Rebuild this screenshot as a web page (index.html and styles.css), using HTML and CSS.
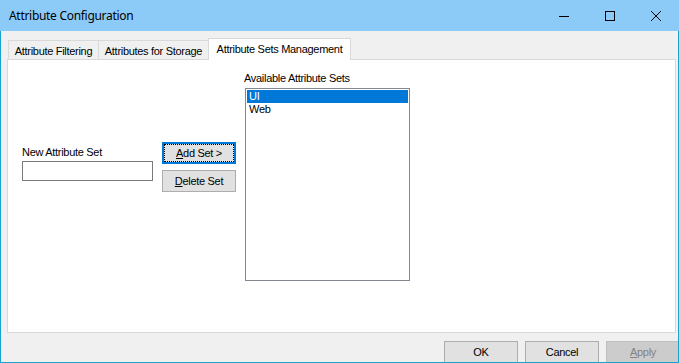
FILE: index.html
```html
<!DOCTYPE html>
<html>
<head>
<meta charset="utf-8">
<link rel="stylesheet" href="styles.css">
</head>
<body>
<div class="window">
  <div class="titlebar">
    <span class="title">Attribute Configuration</span>
    <div class="controls">
      <div class="ctl"><svg width="10" height="10" viewBox="0 0 10 10"><path d="M0 5.5H10" stroke="#000" stroke-width="1"/></svg></div>
      <div class="ctl"><svg width="10" height="10" viewBox="0 0 10 10"><rect x="0.5" y="0.5" width="9" height="9" fill="none" stroke="#000" stroke-width="1"/></svg></div>
      <div class="ctl"><svg width="10" height="10" viewBox="0 0 10 10"><path d="M0 0L10 10M10 0L0 10" stroke="#000" stroke-width="1"/></svg></div>
    </div>
  </div>
  <div class="client">
    <div class="tabs">
      <div class="tab t1">Attribute Filtering</div>
      <div class="tab t2">Attributes for Storage</div>
      <div class="tab t3 active">Attribute Sets Management</div>
    </div>
    <div class="page">
      <div class="col-new">
        <div class="label">New Attribute Set</div>
        <div class="textbox"></div>
      </div>
      <div class="col-btns">
        <div class="btn focused"><span class="focusrect"><u>A</u>dd Set &gt;</span></div>
        <div class="btn"><u>D</u>elete Set</div>
      </div>
      <div class="col-list">
        <div class="label">Available Attribute Sets</div>
        <div class="listbox">
          <div class="item selected">UI</div>
          <div class="item">Web</div>
        </div>
      </div>
    </div>
    <div class="footer">
      <div class="btn fbtn">OK</div>
      <div class="btn fbtn">Cancel</div>
      <div class="btn fbtn disabled"><u>A</u>pply</div>
    </div>
  </div>
</div>
</body>
</html>
```
FILE: styles.css
```css
html, body {
  margin: 0;
  padding: 0;
  background: #f0f0f0;
}
.window {
  width: 679px;
  height: 363px;
  overflow: hidden;
  font-family: "Liberation Sans", Arial, sans-serif;
  font-size: 11px;
  letter-spacing: -0.3px;
  color: #000;
}
.titlebar {
  height: 31px;
  background: #8ccaf8;
  display: flex;
  align-items: center;
}
.title {
  font-family: "Noto Sans", sans-serif;
  font-size: 12px;
  letter-spacing: -0.3px;
  padding-left: 9px;
  flex: 1;
  padding-bottom: 1px;
}
.controls {
  display: flex;
  height: 31px;
}
.ctl {
  width: 46px;
  height: 31px;
  display: flex;
  align-items: center;
  justify-content: center;
}
.ctl svg {
  display: block;
  shape-rendering: crispEdges;
}
.client {
  height: 332px;
  box-sizing: border-box;
  border-left: 1px solid #17a3cc;
  border-right: 1px solid #17a3cc;
  border-bottom: 1px solid #17a3cc;
  background: #f0f0f0;
  overflow: hidden;
}
.tabs {
  display: flex;
  align-items: flex-end;
  padding-top: 7px;
  padding-left: 7px;
  height: 21px;
}
.tab {
  box-sizing: border-box;
  height: 19px;
  border: 1px solid #d9d9d9;
  border-bottom: none;
  background: #f0f0f0;
  display: flex;
  align-items: center;
  justify-content: center;
  white-space: nowrap;
  padding-top: 1px;
}
.t1 { width: 91px; }
.t2 { width: 110px; border-left: none; }
.t3 { width: 143px; }
.tab.active {
  height: 22px;
  background: #fff;
  position: relative;
  z-index: 1;
  margin-bottom: -1px;
  padding-bottom: 3px;
  margin-left: -1px;
}
.page {
  margin-left: 6px;
  width: 669px;
  height: 274px;
  box-sizing: border-box;
  border: 1px solid #d9d9d9;
  background: #fff;
  display: flex;
  align-items: flex-start;
}
.label {
  line-height: 13px;
  white-space: nowrap;
}
.col-new {
  margin-left: 14px;
  margin-top: 86px;
}
.textbox {
  margin-top: 2px;
  width: 131px;
  height: 20px;
  box-sizing: border-box;
  border: 1px solid #7a7a7a;
  background: #fff;
}
.col-btns {
  margin-left: 9px;
  margin-top: 82px;
  display: flex;
  flex-direction: column;
  gap: 6px;
}
.btn {
  box-sizing: border-box;
  width: 74px;
  height: 22px;
  background: #e1e1e1;
  border: 1px solid #adadad;
  display: flex;
  align-items: center;
  justify-content: center;
  white-space: nowrap;
}
.btn.focused {
  border: 2px solid #0078d7;
  padding: 1px;
}
.focusrect {
  flex: 1;
  align-self: stretch;
  display: flex;
  align-items: center;
  justify-content: center;
  outline: 1px dotted #000;
}
.col-list {
  margin-left: 8px;
  margin-top: 12px;
}
.listbox {
  margin-top: 3px;
  margin-left: 1px;
  width: 165px;
  height: 193px;
  box-sizing: border-box;
  border: 1px solid #828790;
  background: #fff;
  padding: 1px;
}
.item {
  height: 13px;
  line-height: 13px;
  padding-left: 2px;
}
.item.selected {
  background: #0078d7;
  color: #fff;
}
.footer {
  display: flex;
  gap: 7px;
  padding-left: 443px;
  margin-top: 8px;
}
.fbtn {
  flex: none;
  height: 23px;
  padding-bottom: 1px;
}
.fbtn.disabled {
  background: #cccccc;
  border-color: #bfbfbf;
  color: #838383;
}
```
